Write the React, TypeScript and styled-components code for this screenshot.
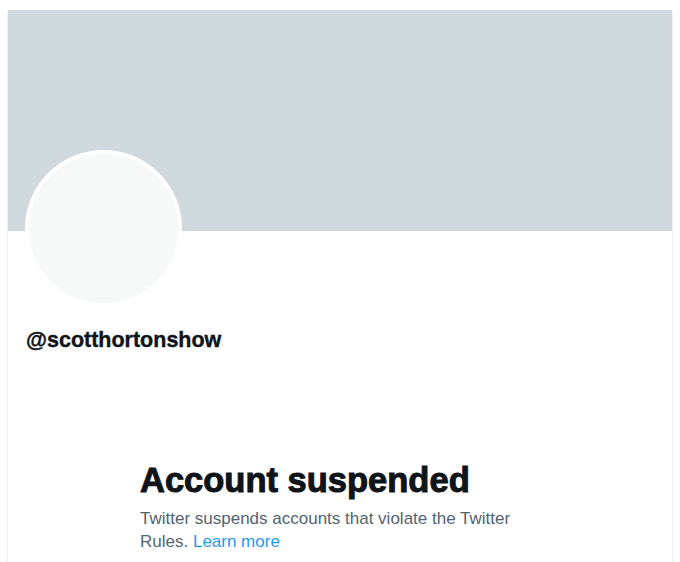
import React from "react";
import styled, { createGlobalStyle } from "styled-components";

const GlobalStyle = createGlobalStyle`
  html, body {
    margin: 0;
    padding: 0;
    background: #ffffff;
  }
  body {
    font-family: "Liberation Sans", Arial, sans-serif;
    color: #0f1419;
  }
`;

export default function App() {
  return (
    <>
      <GlobalStyle />
      <Page>
        <Column>
          <Banner />
          <Avatar />
          <Handle>@scotthortonshow</Handle>
          <Notice>
            <NoticeTitle>Account suspended</NoticeTitle>
            <NoticeText>
              Twitter suspends accounts that violate the Twitter Rules.{" "}
              <LearnMore href="#">Learn more</LearnMore>
            </NoticeText>
          </Notice>
        </Column>
      </Page>
    </>
  );
}

/* Styled components */
const Page = styled.div`
  padding: 10px 7px 0;
  min-height: 100vh;
  box-sizing: border-box;
`;

const Column = styled.main`
  display: flex;
  flex-direction: column;
  border-left: 1px solid #eff3f4;
  border-right: 1px solid #eff3f4;
  min-height: calc(100vh - 10px);
  box-sizing: border-box;
`;

const Banner = styled.div`
  height: 221px;
  background: #cfd9de;
`;

const Avatar = styled.div`
  width: 149px;
  height: 149px;
  margin: -81px 0 0 17px;
  border: 4px solid #ffffff;
  border-radius: 50%;
  background: #f7f9f9;
`;

const Handle = styled.h2`
  margin: 21px 0 0 18px;
  font-size: 21.5px;
  line-height: 25px;
  font-weight: 700;
  color: #0f1419;
  -webkit-text-stroke: 0.4px #0f1419;
`;

const Notice = styled.section`
  width: 400px;
  margin: 107px auto 0;
  display: flex;
  flex-direction: column;
  gap: 7px;
`;

const NoticeTitle = styled.h1`
  margin: 0;
  font-size: 34.5px;
  line-height: 40px;
  font-weight: 800;
  color: #0f1419;
  -webkit-text-stroke: 1px #0f1419;
`;

const NoticeText = styled.p`
  margin: 0;
  font-size: 17px;
  line-height: 23px;
  color: #536471;
`;

const LearnMore = styled.a`
  display: inline-block;
  color: #1d9bf0;
  text-decoration: none;
`;
